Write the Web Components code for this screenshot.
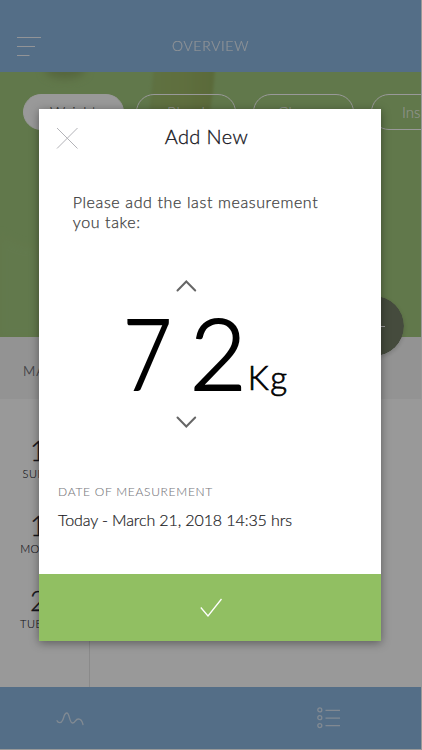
<!DOCTYPE html>
<html lang="en">
<head>
<meta charset="utf-8">
<meta name="viewport" content="width=device-width, initial-scale=1">
<title>Overview</title>
<style>
  body {
    margin: 0;
    font-family: Lato, "Open Sans", sans-serif;
    font-weight: 300;
    overflow: hidden;
  }
</style>
</head>
<body>
<health-app></health-app>

<script>
class AppHeader extends HTMLElement {
  constructor() {
    super();
    this.attachShadow({ mode: 'open' }).innerHTML = `
      <style>
        :host {
          display: grid;
          grid-template-columns: 60px 1fr 60px;
          height: 71.5px;
          background: #8cb7e1;
          color: #fff;
        }
        svg { display: block; margin: 36px 0 0 17px; }
        h1 {
          margin: 35.5px 0 0;
          font-size: 14px;
          line-height: 20px;
          font-weight: 300;
          letter-spacing: .7px;
          text-align: center;
          opacity: .85;
          -webkit-text-stroke: .15px;
        }
      </style>
      <svg width="25" height="21" fill="none" stroke="#fff" opacity=".9">
        <path d="M0 1.5H24M0 10.5H18M0 19.5H12.5"/>
      </svg>
      <h1><slot></slot></h1>
    `;
  }
}
customElements.define('app-header', AppHeader);

class FilterPill extends HTMLElement {
  constructor() {
    super();
    this.attachShadow({ mode: 'open' }).innerHTML = `
      <style>
        :host {
          box-sizing: border-box;
          flex: none;
          width: 100.5px;
          height: 36px;
          margin-right: 17.2px;
          border: 1px solid #fff;
          border-radius: 18px;
          color: rgba(255, 255, 255, .8);
          font-size: 15px;
          line-height: 35px;
          letter-spacing: 0;
          text-align: center;
          -webkit-text-stroke: .15px;
        }
        :host([active]) {
          margin-right: 12.2px;
          background: #fff;
          color: #555;
        }
        :host(:last-child) { padding-left: 3px; }
      </style>
      <slot></slot>
    `;
  }
}
customElements.define('filter-pill', FilterPill);

class HeroPanel extends HTMLElement {
  constructor() {
    super();
    this.attachShadow({ mode: 'open' }).innerHTML = `
      <style>
        :host {
          display: block;
          position: relative;
          height: 265px;
          background: #a2c87d;
        }
        .photo { position: absolute; inset: 0; }
        .pills {
          position: relative;
          display: flex;
          overflow: hidden;
          padding: 22.5px 0 0 23px;
        }
        .add {
          position: absolute;
          left: 344px;
          top: 224px;
          z-index: 1;
          border-radius: 50%;
          box-shadow: 0 2px 4px rgba(0, 0, 0, .15);
        }
      </style>
      <svg class="photo" width="421" height="265">
        <defs>
          <filter id="soft" x="-50%" y="-50%" width="200%" height="200%"><feGaussianBlur stdDeviation="4"/></filter>
          <filter id="edge"><feGaussianBlur stdDeviation="1.5"/></filter>
          <linearGradient id="stem">
            <stop offset="0" stop-color="#9dbd6f"/>
            <stop offset=".5" stop-color="#9fb968"/>
            <stop offset="1" stop-color="#96b061"/>
          </linearGradient>
        </defs>
        <ellipse cx="65" cy="-2" rx="20" ry="9" fill="#8fab68" filter="url(#soft)"/>
        <path d="M154 -4H215L213 20L208 50H148Z" fill="url(#stem)" filter="url(#edge)"/>
        <path d="M0 160Q18 176 39 174V266H0Z" fill="#a8ce84" opacity=".4" filter="url(#soft)"/>
      </svg>
      <div class="pills"><slot></slot></div>
      <svg class="add" width="60" height="60">
        <circle cx="30" cy="30" r="30" fill="#737d67"/>
        <path d="M19 30.5H41M30 19.5V41.5" stroke="#fff"/>
      </svg>
    `;
  }
}
customElements.define('hero-panel', HeroPanel);

class DayEntry extends HTMLElement {
  constructor() {
    super();
    this.attachShadow({ mode: 'open' }).innerHTML = `
      <style>
        :host {
          display: block;
          height: 75px;
          color: #22222c;
          text-align: center;
        }
        b {
          display: block;
          font-size: 27px;
          font-weight: 300;
          line-height: 32px;
          -webkit-text-stroke: .3px;
        }
        span {
          display: block;
          font-size: 11px;
          line-height: 14px;
          letter-spacing: .5px;
          -webkit-text-stroke: .1px;
        }
      </style>
      <b></b>
      <span><slot></slot></span>
    `;
  }

  connectedCallback() {
    this.shadowRoot.querySelector('b').textContent = this.getAttribute('day');
  }
}
customElements.define('day-entry', DayEntry);

class DayLog extends HTMLElement {
  constructor() {
    super();
    this.attachShadow({ mode: 'open' }).innerHTML = `
      <style>
        :host {
          flex: 1;
          display: flex;
          flex-direction: column;
          background: #fff;
        }
        h2 {
          margin: 0;
          height: 62px;
          padding: 0 23px;
          background: #f6f6f6;
          color: #62626a;
          font-size: 13.5px;
          font-weight: 300;
          line-height: 68px;
          letter-spacing: 1px;
          -webkit-text-stroke: .2px;
        }
        .days {
          flex: 1;
          box-sizing: border-box;
          width: 90px;
          padding: 36.5px 0 0 2.5px;
          border-right: 1px solid #e6e6e6;
        }
      </style>
      <h2>MARCH 2018</h2>
      <div class="days"><slot></slot></div>
    `;
  }
}
customElements.define('day-log', DayLog);

class TabBar extends HTMLElement {
  constructor() {
    super();
    this.attachShadow({ mode: 'open' }).innerHTML = `
      <style>
        :host {
          display: flex;
          justify-content: space-between;
          align-items: center;
          box-sizing: border-box;
          height: 62px;
          padding: 0 80px 0 56px;
          background: #8cb7e1;
        }
        svg { display: block; fill: none; stroke: #fff; opacity: .65; }
        .wave { margin-top: 2px; }
      </style>
      <svg class="wave" width="29" height="16" stroke-width="1.3" stroke-linecap="round">
        <path d="M1 9.8C2 12 5.2 12.6 6.6 9.3C8.1 6.3 8.2 2 10.8 2C13.7 2 13.3 12 16.5 12C19.5 12 19 8 22.5 8C25.5 8 26.3 10.5 27 13.5"/>
      </svg>
      <svg width="24" height="22" stroke-width="1.3">
        <circle cx="2.8" cy="2.9" r="2"/><circle cx="2.8" cy="10.7" r="2"/><circle cx="2.8" cy="18.6" r="2"/>
        <path d="M8.5 3.3H23M8.5 11.2H23M8.5 18.7H23"/>
      </svg>
    `;
  }
}
customElements.define('tab-bar', TabBar);

class WeightPicker extends HTMLElement {
  constructor() {
    super();
    this.attachShadow({ mode: 'open' }).innerHTML = `
      <style>
        :host { display: block; color: #000; }
        svg {
          display: block;
          margin-left: 137px;
          fill: none;
          stroke: #666;
          stroke-width: 2;
          stroke-linecap: round;
        }
        .value {
          display: flex;
          align-items: baseline;
          height: 124px;
          padding-left: 82px;
          line-height: 121px;
        }
        .digit {
          width: 69px;
          font-size: 98px;
          -webkit-text-stroke: 2px;
        }
        .digit:first-child {
          transform: scaleX(.86);
          transform-origin: 14px 0;
        }
        .unit {
          margin-left: -11px;
          font-size: 33px;
          letter-spacing: 1.5px;
          -webkit-text-stroke: .7px;
        }
      </style>
      <svg width="21" height="12"><path d="M1.5 10.5L10.3 1.5L19.2 10.5"/></svg>
      <div class="value">
        <span class="digit">7</span><span class="digit">2</span><span class="unit">Kg</span>
      </div>
      <svg width="21" height="12"><path d="M1.5 1.5L10.3 10.5L19.2 1.5"/></svg>
    `;
  }
}
customElements.define('weight-picker', WeightPicker);

class AddDialog extends HTMLElement {
  constructor() {
    super();
    this.attachShadow({ mode: 'open' }).innerHTML = `
      <style>
        :host {
          display: flex;
          flex-direction: column;
          width: 342.5px;
          height: 532.3px;
          background: #fff;
          box-shadow: 0 2px 9px rgba(0, 0, 0, .4);
        }
        header {
          display: grid;
          grid-template-columns: 50px 1fr 57px;
          height: 56px;
        }
        header svg { margin: 18px 0 0 17px; }
        h2 {
          margin: 14px 0 0;
          font-size: 20px;
          font-weight: 300;
          line-height: 26px;
          letter-spacing: .4px;
          color: #14141c;
          text-align: center;
          -webkit-text-stroke: .3px;
        }
        p {
          margin: 27px 0 0 34px;
          width: 270px;
          height: 88px;
          font-size: 16px;
          line-height: 20px;
          letter-spacing: .62px;
          color: #3c3c3c;
          -webkit-text-stroke: .25px;
        }
        .label {
          margin: 56px 0 0 19.3px;
          font-size: 12px;
          line-height: 16px;
          letter-spacing: .72px;
          color: #77777c;
          -webkit-text-stroke: .1px;
        }
        .date {
          margin: 10px 0 0 19.3px;
          font-size: 16px;
          line-height: 20px;
          letter-spacing: -.1px;
          color: #1c1c24;
          -webkit-text-stroke: .2px;
        }
        footer {
          display: flex;
          justify-content: center;
          align-items: center;
          box-sizing: border-box;
          height: 67.5px;
          margin-top: auto;
          padding-left: 3px;
          background: #91bf62;
        }
      </style>
      <header>
        <svg width="23" height="23" fill="none" stroke="#b3b3b8"><path d="M1 1L21.5 21.5M21.5 1L1 21.5"/></svg>
        <h2>Add New</h2>
      </header>
      <p>Please add the last measurement you take:</p>
      <weight-picker></weight-picker>
      <div class="label">DATE OF MEASUREMENT</div>
      <div class="date">Today - March 21, 2018 14:35 hrs</div>
      <footer>
        <svg width="22" height="19" fill="none" stroke="#fff" stroke-width="1.3"><path d="M.8 9.5L8 18L21.5 1"/></svg>
      </footer>
    `;
  }
}
customElements.define('add-dialog', AddDialog);

class HealthApp extends HTMLElement {
  constructor() {
    super();
    this.attachShadow({ mode: 'open' }).innerHTML = `
      <style>
        :host {
          display: block;
          position: relative;
          width: 422px;
          height: 750px;
          overflow: hidden;
          background: #fff;
        }
        .screen {
          display: flex;
          flex-direction: column;
          width: 421px;
          height: 749px;
        }
        .overlay {
          position: absolute;
          inset: 0;
          z-index: 2;
          box-sizing: border-box;
          padding: 109px 0 0 38.7px;
          background: rgba(0, 0, 0, .4);
        }
      </style>
      <div class="screen">
        <app-header>OVERVIEW</app-header>
        <hero-panel>
          <filter-pill active>Weight</filter-pill>
          <filter-pill>Blood</filter-pill>
          <filter-pill>Glucose</filter-pill>
          <filter-pill>Insulin</filter-pill>
        </hero-panel>
        <day-log>
          <day-entry day="18">SUNDAY</day-entry>
          <day-entry day="19">MONDAY</day-entry>
          <day-entry day="20">TUESDAY</day-entry>
        </day-log>
        <tab-bar></tab-bar>
      </div>
      <div class="overlay"><add-dialog></add-dialog></div>
    `;
  }
}
customElements.define('health-app', HealthApp);
</script>
</body>
</html>
